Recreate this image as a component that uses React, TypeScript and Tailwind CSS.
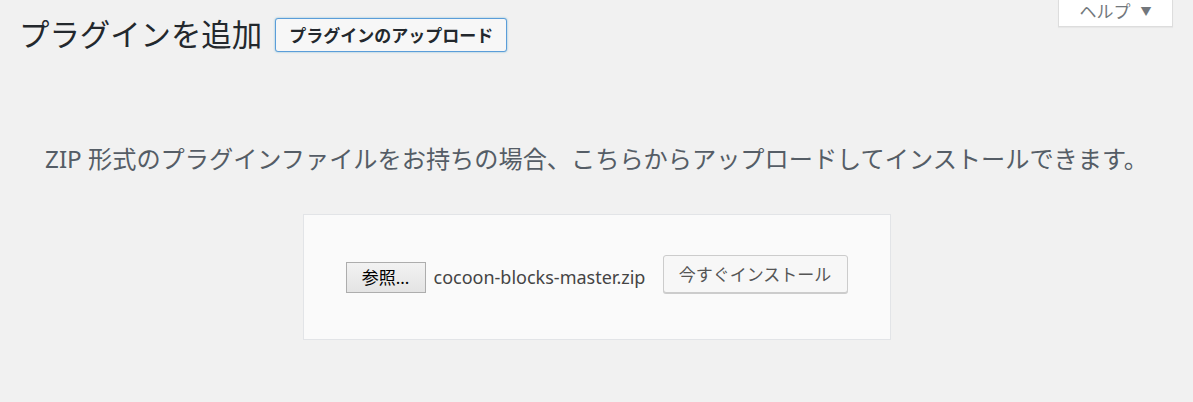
export default function App() {
  return (
    <div className="min-h-[402px] w-full bg-[#f1f1f1] font-['Noto_Sans','Noto_Sans_CJK_JP',sans-serif] text-[#23282d]">
      {/* header row: title + upload toggle, help tab on the right */}
      <div className="flex items-start justify-between">
        <div className="flex items-center gap-[13px] pl-[19px] pt-[18px]">
          <h1 className="text-[30.4px] font-normal leading-[34px] text-[#23282d]">
            プラグインを追加
          </h1>
          <button className="h-[34px] w-[232px] rounded-[3px] border border-[#5b9dd9] bg-[#f7f7f7] text-[17px] font-bold leading-none text-[#23282d] shadow-[0_0_2px_rgba(30,140,190,0.6)]">
            プラグインのアップロード
          </button>
        </div>
        <div className="mr-[20px] flex h-[27px] w-[115px] items-center justify-center gap-[10px] border-x border-b border-[#dddddd] bg-white pb-[3px] shadow-[0_1px_1px_rgba(0,0,0,0.04)]">
          <span className="text-[17px] leading-none text-[#72777c]">ヘルプ</span>
          <span className="text-[11px] leading-none text-[#72777c]">▼</span>
        </div>
      </div>

      {/* upload area */}
      <div className="flex flex-col items-center pt-[92px]">
        <p className="text-[24.2px] leading-[30px] text-[#555d66]">
          ZIP 形式のプラグインファイルをお持ちの場合、こちらからアップロードしてインストールできます。
        </p>
        <div className="mt-[40px] flex h-[126px] w-[588px] items-center border border-[#e2e4e7] bg-[#fafafa] px-[42px]">
          <button className="h-[31px] w-[80px] border border-[#adadad] bg-gradient-to-b from-[#f2f2f2] to-[#e4e4e4] text-[17px] leading-none text-black">
            参照...
          </button>
          <span className="ml-[8px] text-[18px] text-[#444444]">cocoon-blocks-master.zip</span>
          <button className="ml-auto mb-[6px] h-[38px] w-[185px] rounded-[3px] border border-[#cccccc] bg-[#f7f7f7] text-[17px] leading-none text-[#555555] shadow-[0_1px_0_#cccccc]">
            今すぐインストール
          </button>
        </div>
      </div>
    </div>
  );
}
